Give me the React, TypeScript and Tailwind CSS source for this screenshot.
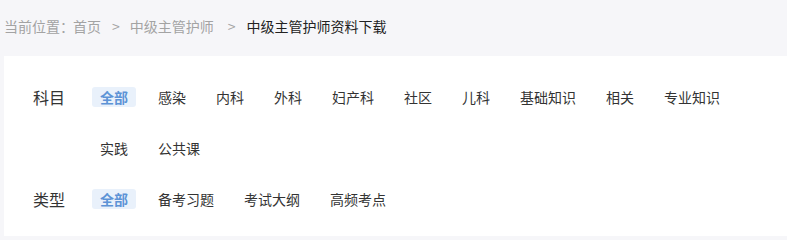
import React from "react";

const font = { fontFamily: '"Microsoft YaHei", "Noto Sans CJK SC", "Noto Sans", sans-serif' };

function Row({ label, items }: { label: string; items: string[] }) {
  return (
    <div className="flex items-start">
      <div className="w-[59px] h-5 flex items-center text-[16px] text-[#333]">{label}</div>
      <div className="flex flex-wrap w-[660px] gap-x-[14px] gap-y-[31px]">
        {items.map((t, i) => (
          <span
            key={t + i}
            className={
              "h-5 px-2 flex items-center rounded-[3px] text-[14px] leading-none " +
              (i === 0 ? "bg-[#e9f1fb] text-[#5d93d6] font-semibold" : "text-[#333]")
            }
          >
            {t}
          </span>
        ))}
      </div>
    </div>
  );
}

export default function App() {
  return (
    <div className="w-[787px] h-[240px] bg-[#f6f6f9] overflow-hidden" style={font}>
      <div className="h-[56px] flex items-center pl-1 pb-[4px] text-[14px] text-[#a3a3a3]">
        <span>当前位置：</span>
        <span className="-ml-[1px]">首页</span>
        <span className="ml-[11px]">&gt;</span>
        <span className="ml-[10px]">中级主管护师</span>
        <span className="ml-[14px]">&gt;</span>
        <span className="ml-[11px] text-[#222]">中级主管护师资料下载</span>
      </div>
      <div className="ml-1 bg-white h-[180px] pt-[31px] pl-[29px] flex flex-col gap-y-[31px]">
        <Row
          label="科目"
          items={["全部", "感染", "内科", "外科", "妇产科", "社区", "儿科", "基础知识", "相关", "专业知识", "实践", "公共课"]}
        />
        <Row label="类型" items={["全部", "备考习题", "考试大纲", "高频考点"]} />
      </div>
    </div>
  );
}
